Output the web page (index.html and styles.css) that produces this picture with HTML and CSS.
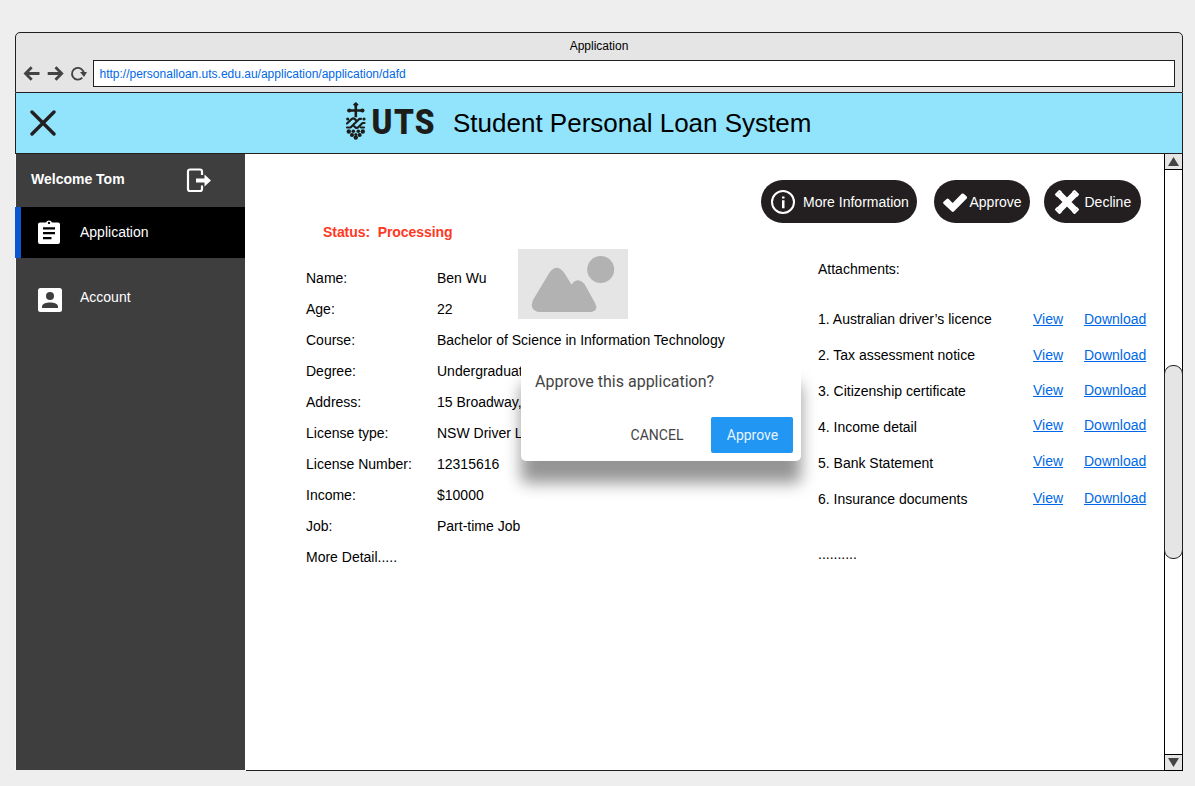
FILE: index.html
```
<!DOCTYPE html>
<html lang="en">
<head>
<meta charset="utf-8">
<title>Application</title>
<link rel="stylesheet" href="styles.css">
</head>
<body>
<div class="window">
  <div class="chrome">
    <div class="title">Application</div>
    <div class="toolbar">
      <svg class="nav" width="64" height="18" viewBox="0 0 64 18" fill="none" stroke="#444" stroke-width="2.8">
        <path d="M8.700 2.300L2.500 8.500l6.200 6.200M2.500 8.500H16.500"/>
        <path d="M32.500 2.300L38.700 8.500l-6.200 6.200M38.700 8.500H24.700"/>
        <path d="M59.300 12.700A5.900 5.900 0 1 1 60.800 8.500" stroke-width="1.800"/>
        <path d="M57 7h7l-3 5z" fill="#444" stroke="none"/>
      </svg>
      <div class="address">http://personalloan.uts.edu.au/application/application/dafd</div>
    </div>
  </div>
  <header class="header">
    <svg class="close" width="26" height="26" viewBox="0 0 26 26"><path d="M2 2L24 24M24 2L2 24" stroke="#231f20" stroke-width="3.400" stroke-linecap="round"/></svg>
    <svg class="emblem" width="24" height="42" viewBox="0 0 24 42" fill="#1c1c1a">
      <path d="M11.800 0l2.800 2.600-2.800 2.600L9 2.600z"/>
      <path d="M10.500 4h2.600v3.200h5.500v2.600h-5.500v5.500h-2.600V9.800H5V7.200h5.500z"/>
      <circle cx="5.200" cy="8.500" r="2.100"/><circle cx="18.400" cy="8.500" r="2.100"/>
      <g fill="none" stroke="#1c1c1a" stroke-width="2.200" stroke-linecap="round" stroke-linejoin="round">
        <path d="M3 21.500l5-4.700q1.500-1 3 .5l2 2M3 25.500h3.500l9-8.700h1.500M9.500 23.500l2 2q1.500 1 3-.5l4-4h2M17 25.500h3"/>
      </g>
      <circle cx="3.700" cy="17" r="1.600"/><circle cx="20" cy="17" r="1.600"/>
      <circle cx="4.800" cy="29.500" r="2.200"/><circle cx="18.800" cy="29.500" r="2.200"/>
      <circle cx="9.300" cy="29.300" r="1.800"/><circle cx="14.300" cy="29.300" r="1.800"/>
      <circle cx="8" cy="33" r="2.100"/><circle cx="15.600" cy="33" r="2.100"/>
      <circle cx="11.800" cy="32.500" r="1.500"/><circle cx="11.800" cy="35.600" r="2.200"/>
    </svg>
    <div class="wordmark">UTS</div>
    <h1 class="system">Student Personal Loan System</h1>
  </header>
  <div class="body">
    <nav class="sidebar">
      <div class="welcome"><span>Welcome Tom</span>
        <svg width="26" height="26" viewBox="0 0 26 26"><path d="M16 8V4.500a2 2 0 0 0-2-2H4A2 2 0 0 0 2 4.500V22a2 2 0 0 0 2 2h10a2 2 0 0 0 2-2V18.500" fill="none" stroke="#fff" stroke-width="2.200"/><path d="M10 11.500h8.500V7.500L25 13.500l-6.500 6v-4H10z" fill="#fff"/></svg>
      </div>
      <a class="item active">
        <svg width="26" height="26" viewBox="0 0 26 26"><path fill="#fff" fill-rule="evenodd" d="M4 3.500h5a3.200 3.200 0 0 1 6 0h6a2 2 0 0 1 2 2V23a2 2 0 0 1-2 2H3a2 2 0 0 1-2-2V5.500a2 2 0 0 1 2-2zM12 2.700a1.200 1.200 0 1 0 .01 0zM6 8.200v2.300h12V8.200zM6 13v2.300h12V13zM6 18v2.300h8.500V18z"/></svg>
        <span>Application</span>
      </a>
      <a class="item account">
        <svg width="26" height="26" viewBox="0 0 26 26"><rect x="1" y="1" width="24" height="24" rx="2.500" fill="#fff"/><circle cx="13" cy="9" r="4" fill="#3e3e3e"/><path d="M5 21v-1.500c0-5.500 16-5.500 16 0V21z" fill="#3e3e3e"/></svg>
        <span>Account</span>
      </a>
    </nav>
    <main class="main">
      <div class="actions">
        <button class="pill info"><svg width="26" height="26" viewBox="0 0 26 26"><circle cx="13" cy="13" r="11" fill="none" stroke="#fff" stroke-width="2"/><path d="M12 7.500h2.500v2H12zM12 11.300h2.500v8H12z" fill="#fff"/></svg><span>More Information</span></button>
        <button class="pill approve"><svg width="24" height="24" viewBox="0 0 24 24"><path d="M.5 11.800L3.700 8.900q1-.7 2 .2L9.600 13 18.700 3.800q1-.8 2 0L23.700 6.500q.8 1 0 2L10.800 21.500q-1 .8-2 0L.5 13.700q-.7-1 0-1.900z" fill="#fff"/></svg><span>Approve</span></button>
        <button class="pill decline"><svg width="26" height="26" viewBox="0 0 26 26"><path d="M4.800 4.800L21.200 21.200M21.200 4.800L4.800 21.200" stroke="#fff" stroke-width="6.500"/><path d="M3.500 7L2 5.500 5.500 2 7 3.500zM19 3.500L20.500 2 24 5.500 22.500 7zM3.500 19L2 20.500 5.500 24 7 22.500zM22.500 19L24 20.500 20.500 24 19 22.500z" fill="none" stroke="#fff" stroke-width="2" stroke-linejoin="round"/></svg><span>Decline</span></button>
      </div>
      <div class="columns">
        <section class="details">
          <div class="status">Status:&nbsp; Processing</div>
          <div class="record">
            <dl class="fields">
              <dt>Name:</dt><dd>Ben Wu</dd>
              <dt>Age:</dt><dd>22</dd>
              <dt>Course:</dt><dd>Bachelor of Science in Information Technology</dd>
              <dt>Degree:</dt><dd>Undergraduate</dd>
              <dt>Address:</dt><dd>15 Broadway,</dd>
              <dt>License type:</dt><dd>NSW Driver L</dd>
              <dt>License Number:</dt><dd>12315616</dd>
              <dt>Income:</dt><dd>$10000</dd>
              <dt>Job:</dt><dd>Part-time Job</dd>
              <dt>More Detail.....</dt><dd></dd>
            </dl>
            <svg class="photo" width="110" height="70" viewBox="0 0 110 70"><rect width="110" height="70" fill="#e5e5e5"/><g fill="#b2b2b2"><circle cx="82.700" cy="20.500" r="13.500"/><path d="M15 51L31.500 23.500Q38.500 14 46 23.500L53.500 35.500Q60 27.500 66.500 35L77 54Q81 62 73 63H21Q11 61 15 51z"/></g></svg>
          </div>
        </section>
        <section class="attachments">
          <div class="heading">Attachments:</div>
          <div class="files">
            <div class="names">
              <span>1. Australian driver’s licence</span>
              <span>2. Tax assessment notice</span>
              <span>3. Citizenship certificate</span>
              <span>4. Income detail</span>
              <span>5. Bank Statement</span>
              <span>6. Insurance documents</span>
            </div>
            <div class="links">
              <a>View</a><a>Download</a>
              <a>View</a><a>Download</a>
              <a>View</a><a>Download</a>
              <a>View</a><a>Download</a>
              <a>View</a><a>Download</a>
              <a>View</a><a>Download</a>
            </div>
          </div>
          <div class="more">..........</div>
        </section>
      </div>
    </main>
    <div class="scrollbar">
      <div class="arrow"><svg width="11" height="9" viewBox="0 0 11 9"><path d="M5.500 0L11 9H0z" fill="#444"/></svg></div>
      <div class="track"><div class="thumb"></div></div>
      <div class="arrow down"><svg width="11" height="9" viewBox="0 0 11 9"><path d="M5.500 9L11 0H0z" fill="#444"/></svg></div>
    </div>
  </div>
</div>
<div class="dialog">
  <p>Approve this application?</p>
  <div class="buttons"><button class="cancel">CANCEL</button><button class="confirm">Approve</button></div>
</div>
</body>
</html>
```
FILE: styles.css
```
* { box-sizing: border-box; margin: 0; }
body { width: 1195px; height: 786px; overflow: hidden; background: #eee; padding: 32px 12px 15px 15px; font: 14px/18px "Liberation Sans", Arial, sans-serif; color: #000; }
button { border: 0; font: inherit; padding: 0; }
svg { display: block; flex: none; }
.window { display: flex; flex-direction: column; height: 739px; }
.chrome { height: 61px; border: 1px solid #231f20; border-radius: 5px 5px 0 0; background: #e5e5e5; font-size: 12px; }
.title { height: 27px; line-height: 27px; text-align: center; }
.toolbar { display: flex; align-items: center; gap: 6px; padding: 0 7px; }
.address { flex: 1; height: 27px; line-height: 27px; border: 1px solid #231f20; background: #fff; color: #0068e6; padding-left: 5.5px; }
.header { height: 61px; flex: none; display: flex; align-items: center; background: #91e4fc; border: solid #231f20; border-width: 0 1px 1px; padding-left: 14px; }
.emblem { margin-left: 288px; }
.wordmark { width: 81px; padding-left: 4px; font: 900 35px/48px Roboto, sans-serif; letter-spacing: 1.5px; color: #1c1c1a; transform: scaleX(.9); transform-origin: 0 50%; }
.system { margin-left: 4px; font-size: 26px; font-weight: 400; line-height: 60px; white-space: nowrap; }
.body { flex: 1; display: flex; }
.sidebar { width: 230px; margin-bottom: 1px; background: #3e3e3e; border-left: 1px solid #f8f8f8; color: #fff; }
.welcome { height: 53px; display: flex; justify-content: space-between; align-items: center; padding: 0 33px 2px 15px; font-weight: 700; }
.welcome span { padding-bottom: 2px; }
.item { display: flex; align-items: center; gap: 17px; height: 51px; }
.active { background: #000; margin-left: -1px; border-left: 6px solid #0b57d0; padding-left: 16px; }
.active svg { margin-bottom: 2px; }
.account { margin-top: 15px; padding-left: 21px; }
.account svg { margin-top: 2px; }
.item span { padding-bottom: 1px; }
.account span { padding-bottom: 3px; }
.main { flex: 1; background: #fff; border-bottom: 1px solid #231f20; margin-left: 1px; box-shadow: -1px 0 #fff; padding-top: 26px; }
.actions { display: flex; justify-content: flex-end; padding-right: 23px; }
.pill { height: 43px; border-radius: 22px; background: #231f20; color: #fff; display: flex; align-items: center; white-space: nowrap; }
.info { width: 156px; padding-left: 9px; gap: 7px; }
.approve { width: 96px; margin-left: 17px; padding-left: 9px; gap: 2.5px; }
.decline { width: 97px; margin-left: 14px; padding-left: 10px; gap: 4.5px; }
.columns { display: flex; }
.details { width: 512px; padding-left: 60px; }
.status { color: #ff3823; font-weight: 700; padding-left: 17px; letter-spacing: -.06px; }
.record { display: flex; position: relative; margin-top: 22px; }
.fields { display: grid; grid-template-columns: 131px 300px; grid-auto-rows: 31px; line-height: 31px; }
.fields dt, .fields dd { white-space: nowrap; }
.photo { position: absolute; left: 212px; top: -14px; }
.attachments { padding: 37px 0 0 60px; }
.files { display: flex; line-height: 36px; margin-top: 23px; white-space: nowrap; }
.names { width: 215px; display: grid; grid-auto-rows: 36px; }
.links { display: grid; grid-template-columns: 51px 70px; grid-template-rows: 36px 35px 35px 36px 37px 36px; }
.links a { color: #0068e6; text-decoration: underline; }
.more { margin-top: 28px; }
.scrollbar { width: 19px; border: solid #000; border-width: 0 1px 1px; display: flex; flex-direction: column; background: #fff; }
.arrow { height: 16px; flex: none; background: #e5e5e5; border-bottom: 1px solid #000; display: flex; align-items: center; justify-content: center; }
.down { border-bottom: 0; border-top: 1px solid #000; }
.track { flex: 1; padding-top: 195px; }
.thumb { height: 194px; margin: 0 -1px; border: 1px solid #231f20; border-radius: 9px; background: #e5e5e5; }
.dialog { position: absolute; left: 521px; top: 362px; width: 280px; height: 99px; border-radius: 5px; background: #fff; box-shadow: 0 22px 16px rgba(0,0,0,.42); font-family: Roboto, sans-serif; color: #444; padding: 9px 8px 8.5px 14px; display: flex; flex-direction: column; justify-content: space-between; }
.dialog p { font-size: 16px; line-height: 22px; }
.buttons { display: flex; justify-content: flex-end; gap: 12px; }
.cancel { background: none; color: #444; width: 84px; }
.confirm { width: 82px; height: 36px; border-radius: 2px; background: #2196f3; color: #e8f4fe; padding-left: 1px; }
```
